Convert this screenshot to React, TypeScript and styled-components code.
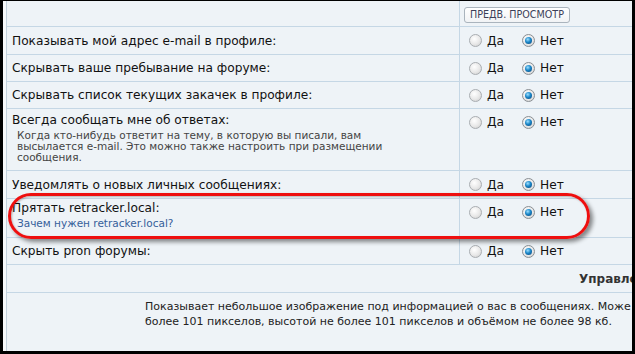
import React from 'react';
import styled, { createGlobalStyle } from 'styled-components';

const GlobalStyle = createGlobalStyle`
  html, body {
    margin: 0;
    padding: 0;
    background: #000;
    overflow: hidden;
  }
  body {
    font-family: "DejaVu Sans", Verdana, sans-serif;
  }
`;

const Frame = styled.div`
  position: relative;
  box-sizing: border-box;
  width: 629px;
  height: 350px;
  margin: 1px 3px 0 3px;
  padding-left: 3px;
  background: #f7f9fb;
  overflow: hidden;
`;

const Table = styled.div`
  height: 100%;
  border-left: 1px solid #c3d1dc;
  background: #eef3f7;
  display: flex;
  flex-direction: column;
`;

const Row = styled.div<{ $height: number }>`
  display: grid;
  grid-template-columns: 453px 1fr;
  height: ${({ $height }) => $height}px;
  border-bottom: 1px solid #c5d7e5;
  flex-shrink: 0;
`;

const LabelCell = styled.div<{ $padTop?: number }>`
  display: flex;
  flex-direction: column;
  justify-content: ${({ $padTop }) => ($padTop !== undefined ? 'flex-start' : 'center')};
  padding: ${({ $padTop }) => $padTop ?? 0}px 0 0 5px;
  border-right: 1px solid #c5d7e5;
`;

const Title = styled.span`
  font-size: 12.2px;
  color: #111;
  white-space: nowrap;
`;

const Hint = styled.span`
  font-size: 10.5px;
  line-height: 11px;
  color: #444;
  padding: 3px 0 0 5px;
  max-width: 380px;
`;

const HintLink = styled.a`
  font-size: 10.5px;
  color: #35609a;
  text-decoration: none;
  padding: 2px 0 0 5px;
`;

const OptionCell = styled.div<{ $top?: boolean }>`
  display: flex;
  align-items: ${({ $top }) => ($top ? 'flex-start' : 'center')};
  padding: ${({ $top }) => ($top ? '6px 0 0 9px' : '0 0 0 9px')};
  gap: 18px;
`;

const Option = styled.label`
  display: flex;
  align-items: center;
  gap: 5px;
  font-size: 12.2px;
  color: #111;
`;

const Radio = styled.span<{ $checked: boolean }>`
  width: 11px;
  height: 11px;
  border-radius: 50%;
  border: 1px solid ${({ $checked }) => ($checked ? '#8a8f94' : '#a9adb1')};
  background: radial-gradient(circle at 40% 35%, #ffffff 0%, #e8e8e8 55%, #c9c9c9 100%);
  display: flex;
  align-items: center;
  justify-content: center;

  &::after {
    content: '';
    display: ${({ $checked }) => ($checked ? 'block' : 'none')};
    width: 7px;
    height: 7px;
    border-radius: 50%;
    background: radial-gradient(circle at 40% 35%, #9fe0ff 0%, #1a86c8 45%, #0b3f70 100%);
  }
`;

const PreviewButton = styled.button`
  font-family: "DejaVu Sans", Verdana, sans-serif;
  font-size: 9.6px;
  color: #3c3f58;
  background: linear-gradient(#ffffff, #f1f3f5);
  border: 1px solid #aab4bd;
  border-radius: 3px;
  padding: 0 5px;
  height: 16px;
  line-height: 14px;
  margin-top: 6px;
`;

const HeaderCell = styled.div`
  padding-left: 4px;
`;

const SectionTitle = styled.div`
  grid-column: 1 / span 2;
  display: flex;
  align-items: center;
  padding-left: 572px;
  font-size: 12px;
  font-weight: bold;
  color: #333;
  white-space: nowrap;
  overflow: hidden;
`;

const WideCell = styled.div`
  padding: 6px 0 0 138px;
  font-size: 11px;
  line-height: 15px;
  color: #222;
  white-space: nowrap;
  overflow: hidden;
`;

const Highlight = styled.div`
  position: absolute;
  left: 5px;
  top: 192px;
  box-sizing: border-box;
  width: 582px;
  height: 46px;
  border: 3.5px solid #ee0f0f;
  border-radius: 24px;
  box-shadow: 3px 3px 4px rgba(0, 0, 0, 0.45), inset 1px 1px 2px rgba(0, 0, 0, 0.25);
  pointer-events: none;
`;

type Setting = {
  title: string;
  hint?: string;
  link?: string;
  height: number;
};

const settings: Setting[] = [
  { title: 'Показывать мой адрес e-mail в профиле:', height: 27 },
  { title: 'Скрывать ваше пребывание на форуме:', height: 26 },
  { title: 'Скрывать список текущих закачек в профиле:', height: 26 },
  {
    title: 'Всегда сообщать мне об ответах:',
    hint: 'Когда кто-нибудь ответит на тему, в которую вы писали, вам высылается e-mail. Это можно также настроить при размещении сообщения.',
    height: 61,
  },
  { title: 'Уведомлять о новых личных сообщениях:', height: 27 },
  { title: 'Прятать retracker.local:', link: 'Зачем нужен retracker.local?', height: 38 },
  { title: 'Скрыть pron форумы:', height: 26 },
];

const YesNo = ({ top }: { top?: boolean }) => (
  <OptionCell $top={top}>
    <Option>
      <Radio $checked={false} />
      Да
    </Option>
    <Option>
      <Radio $checked />
      Нет
    </Option>
  </OptionCell>
);

export default function App() {
  return (
    <>
      <GlobalStyle />
      <Frame>
        <Table>
          <Row $height={25}>
            <LabelCell />
            <HeaderCell>
              <PreviewButton>ПРЕДВ. ПРОСМОТР</PreviewButton>
            </HeaderCell>
          </Row>
          {settings.map((s) => (
            <Row key={s.title} $height={s.height}>
              <LabelCell $padTop={s.hint ? 4 : s.link ? 2 : undefined}>
                <Title>{s.title}</Title>
                {s.hint && <Hint>{s.hint}</Hint>}
                {s.link && <HintLink href="#">{s.link}</HintLink>}
              </LabelCell>
              <YesNo top={!!s.hint || !!s.link} />
            </Row>
          ))}
          <Row $height={27}>
            <SectionTitle>Управление аватарой</SectionTitle>
          </Row>
          <WideCell>
            Показывает небольшое изображение под информацией о вас в сообщениях. Може
            <br />
            более 101 пикселов, высотой не более 101 пикселов и объёмом не более 98 кб.
          </WideCell>
        </Table>
        <Highlight />
      </Frame>
    </>
  );
}
